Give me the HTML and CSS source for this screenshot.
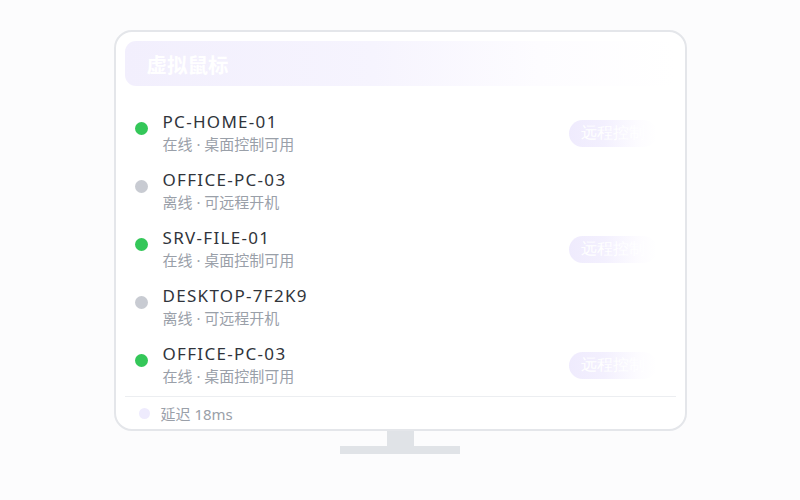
FILE: index.html
```html
<!DOCTYPE html>
<html lang="zh">
<head>
<meta charset="utf-8">
<title>虚拟鼠标</title>
<link rel="stylesheet" href="styles.css">
</head>
<body>
<div class="stage">
  <div class="monitor">
    <div class="header"><span class="title">虚拟鼠标</span></div>
    <div class="list">
      <div class="row">
        <span class="dot on"></span>
        <div class="info"><div class="name">PC-HOME-01</div><div class="sub">在线 · 桌面控制可用</div></div>
        <span class="btn">远程控制</span>
      </div>
      <div class="row">
        <span class="dot off"></span>
        <div class="info"><div class="name">OFFICE-PC-03</div><div class="sub">离线 · 可远程开机</div></div>
      </div>
      <div class="row">
        <span class="dot on"></span>
        <div class="info"><div class="name">SRV-FILE-01</div><div class="sub">在线 · 桌面控制可用</div></div>
        <span class="btn">远程控制</span>
      </div>
      <div class="row">
        <span class="dot off"></span>
        <div class="info"><div class="name">DESKTOP-7F2K9</div><div class="sub">离线 · 可远程开机</div></div>
      </div>
      <div class="row">
        <span class="dot on"></span>
        <div class="info"><div class="name">OFFICE-PC-03</div><div class="sub">在线 · 桌面控制可用</div></div>
        <span class="btn">远程控制</span>
      </div>
    </div>
    <div class="footer"><span class="fdot"></span><span class="latency">延迟 18ms</span></div>
  </div>
  <div class="neck"></div>
  <div class="base"></div>
</div>
</body>
</html>
```
FILE: styles.css
```css
* { box-sizing: border-box; }
html, body { margin: 0; padding: 0; }
body {
  width: 800px;
  height: 500px;
  background: #fcfcfd;
  font-family: "Noto Sans", "Noto Sans CJK SC", sans-serif;
  overflow: hidden;
}
.stage {
  display: flex;
  flex-direction: column;
  align-items: center;
  padding-top: 30px;
}
.monitor {
  width: 573px;
  height: 401px;
  border: 2px solid #e4e6ea;
  border-radius: 18px;
  background: #ffffff;
  padding: 9px 9px 0 9px;
  display: flex;
  flex-direction: column;
}
.header {
  height: 45px;
  border-radius: 11px;
  background: linear-gradient(90deg, #f2effd 0%, #f6f4fe 45%, #fdfcff 75%, #ffffff 100%);
  display: flex;
  align-items: center;
  padding-left: 22px;
}
.title {
  color: #ffffff;
  font-size: 20.5px;
  font-weight: 700;
  font-family: "Noto Sans CJK SC", sans-serif;
}
.list {
  margin-top: 18px;
  display: flex;
  flex-direction: column;
}
.row {
  height: 58px;
  display: flex;
  align-items: center;
  padding-left: 10px;
}
.dot {
  width: 13px;
  height: 13px;
  border-radius: 50%;
  margin-bottom: 10px;
  flex: none;
}
.dot.on { background: #34c759; }
.dot.off { background: #c8cbd2; }
.info {
  margin-left: 15px;
  flex: 1;
}
.name {
  font-size: 17px;
  line-height: 22px;
  letter-spacing: 1.3px;
  color: #30343b;
  font-family: "Noto Sans", "Noto Sans CJK SC", sans-serif;
}
.sub {
  font-size: 15px;
  line-height: 22px;
  color: #9aa0a9;
  font-family: "Noto Sans", "Noto Sans CJK SC", sans-serif;
}
.btn {
  height: 27px;
  border-radius: 14px;
  padding: 0 12px;
  margin-right: 19px;
  display: flex;
  align-items: center;
  font-family: "Liberation Serif", serif;
  font-size: 16px;
  color: #ffffff;
  background: linear-gradient(90deg, #efebfd 0%, #f3f0fe 40%, #fdfcff 80%, #ffffff 100%);
}
.footer {
  margin-top: 2px;
  border-top: 1px solid #eceef1;
  height: 33px;
  display: flex;
  align-items: center;
  padding-left: 14px;
}
.fdot {
  width: 11px;
  height: 11px;
  border-radius: 50%;
  background: #eeebfd;
  flex: none;
}
.latency {
  margin-left: 11px;
  font-size: 15px;
  color: #9aa0a9;
  font-family: "Noto Sans", "Noto Sans CJK SC", sans-serif;
}
.neck {
  width: 27px;
  height: 15px;
  background: #e0e3e7;
}
.base {
  width: 120px;
  height: 8px;
  background: #e0e3e7;
}
```
